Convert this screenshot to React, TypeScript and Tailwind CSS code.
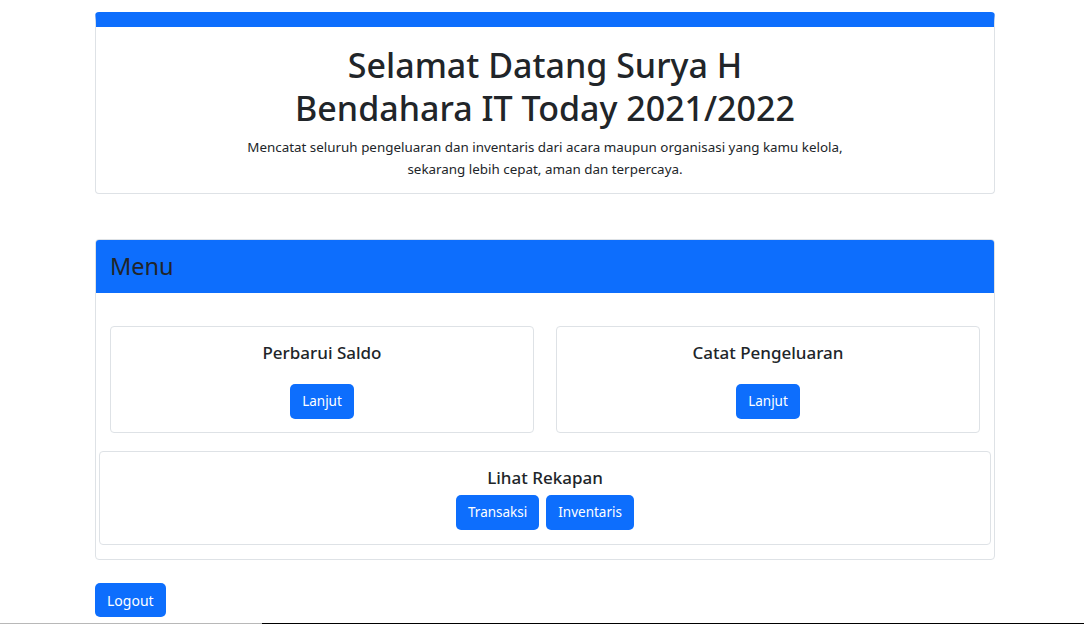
const fontStack = { fontFamily: '"Noto Sans", "Open Sans", sans-serif' }

function Btn({ children, className = '' }: { children: React.ReactNode; className?: string }) {
  return (
    <button
      type="button"
      className={`bg-[#0d6efd] text-white text-[13.5px] leading-[21px] h-[35px] px-[12px] rounded-[5px] ${className}`}
    >
      {children}
    </button>
  )
}

function MenuCard({ title }: { title: string }) {
  return (
    <div className="flex-1 border border-[#dee2e6] rounded-[4px] flex flex-col items-center pt-[14px] pb-[13px]">
      <h5 className="text-[17px] leading-[24px] font-medium text-[#212529]">{title}</h5>
      <Btn className="mt-[19px]">Lanjut</Btn>
    </div>
  )
}

export default function App() {
  return (
    <div className="h-[624px] bg-white flex flex-col text-[#212529]" style={fontStack}>
      <div className="ml-[95px] w-[900px]">
        {/* welcome header */}
        <div className="mt-[12px] border border-[#dee2e6] border-t-[15px] border-t-[#0d6efd] rounded-[4px] text-center pt-[17px] pb-[13px]">
          <h1 className="text-[34px] leading-[43px] font-medium">
            Selamat Datang Surya H
            <br />
            Bendahara IT Today 2021/2022
          </h1>
          <p className="mt-[6px] text-[13.4px] leading-[22px] text-[#212529]">
            Mencatat seluruh pengeluaran dan inventaris dari acara maupun organisasi yang kamu kelola,
            <br />
            sekarang lebih cepat, aman dan terpercaya.
          </p>
        </div>

        {/* menu */}
        <div className="mt-[45px] border border-[#dee2e6] rounded-[4px] overflow-hidden">
          <div className="bg-[#0d6efd] h-[53px] flex items-center px-[14px]">
            <span className="text-[23.5px] text-[#212529]">Menu</span>
          </div>
          <div className="pt-[33px] pb-[14px] px-[3px]">
            <div className="flex gap-[22px] px-[11px]">
              <MenuCard title="Perbarui Saldo" />
              <MenuCard title="Catat Pengeluaran" />
            </div>
            <div className="mt-[18px] border border-[#dee2e6] rounded-[4px] flex flex-col items-center pt-[14px] pb-[14px]">
              <h5 className="text-[17px] leading-[24px] font-medium">Lihat Rekapan</h5>
              <div className="mt-[5px] flex gap-[7px]">
                <Btn>Transaksi</Btn>
                <Btn>Inventaris</Btn>
              </div>
            </div>
          </div>
        </div>

        <button
          type="button"
          className="mt-[23px] bg-[#0d6efd] text-white text-[14px] leading-[21px] h-[34px] px-[12px] rounded-[5px]"
        >
          Logout
        </button>
      </div>

      <div className="mt-auto flex h-[1px]">
        <div className="w-[262px] bg-[#b8b8b8]" />
        <div className="flex-1 bg-black" />
      </div>
    </div>
  )
}
